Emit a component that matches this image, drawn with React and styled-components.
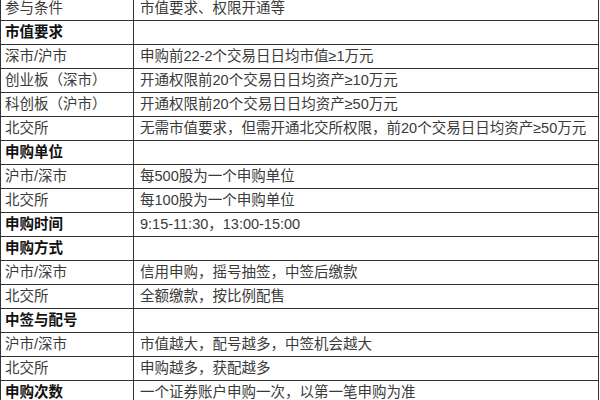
import React from "react";
import styled, { createGlobalStyle } from "styled-components";

const GlobalStyle = createGlobalStyle`
  html, body {
    margin: 0;
    padding: 0;
    background: #ffffff;
    overflow: hidden;
  }
  body {
    font-family: "Liberation Sans", "Noto Sans CJK SC", sans-serif;
  }
`;

const Page = styled.div`
  width: 600px;
  height: 400px;
  overflow: hidden;
`;

const Table = styled.table`
  border-collapse: collapse;
  width: 599px;
  margin-top: -4px;
  table-layout: fixed;
`;

const Row = styled.tr`
  height: 24px;
`;

const Cell = styled.td`
  border: 1px solid #333333;
  height: 23px;
  padding: 0 0 0 ${props => props.$first ? 4 : 6}px;
  font-size: 14.5px;
  line-height: 23px;
  white-space: nowrap;
  overflow: hidden;
  color: ${props => props.$bold ? "#111111" : "#3a3a3a"};
  font-weight: ${props => props.$bold ? 700 : 400};
  vertical-align: middle;
`;

const rows = [
  ["参与条件", "市值要求、权限开通等"],
  ["市值要求", "", true],
  ["深市/沪市", "申购前22-2个交易日日均市值≥1万元"],
  ["创业板（深市）", "开通权限前20个交易日日均资产≥10万元"],
  ["科创板（沪市）", "开通权限前20个交易日日均资产≥50万元"],
  ["北交所", "无需市值要求，但需开通北交所权限，前20个交易日日均资产≥50万元"],
  ["申购单位", "", true],
  ["沪市/深市", "每500股为一个申购单位"],
  ["北交所", "每100股为一个申购单位"],
  ["申购时间", "9:15-11:30，13:00-15:00", true],
  ["申购方式", "", true],
  ["沪市/深市", "信用申购，摇号抽签，中签后缴款"],
  ["北交所", "全额缴款，按比例配售"],
  ["中签与配号", "", true],
  ["沪市/深市", "市值越大，配号越多，中签机会越大"],
  ["北交所", "申购越多，获配越多"],
  ["申购次数", "一个证券账户申购一次，以第一笔申购为准", true],
];

export default function App() {
  return (
    <Page>
      <GlobalStyle />
      <Table>
        <colgroup>
          <col style={{ width: 133 }} />
          <col />
        </colgroup>
        <tbody>
          {rows.map(([label, value, bold], i) => (
            <Row key={i}>
              <Cell $first $bold={bold}>{label}</Cell>
              <Cell>{value}</Cell>
            </Row>
          ))}
        </tbody>
      </Table>
    </Page>
  );
}
